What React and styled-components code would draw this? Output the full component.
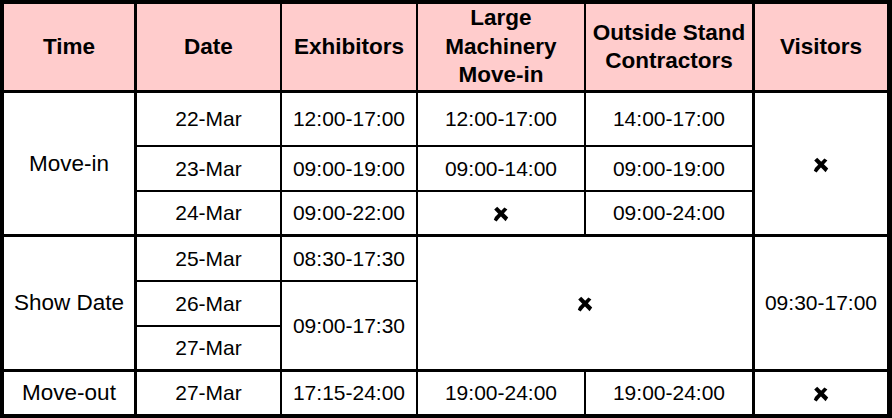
import React from "react";
import styled, { createGlobalStyle } from "styled-components";

const GlobalStyle = createGlobalStyle`
	html, body {
		margin: 0;
		padding: 0;
		background: #ffffff;
	}
	body {
		font-family: "Liberation Sans", Arial, sans-serif;
		color: #000;
	}
`;

const Table = styled.table`
	width: 892px;
	table-layout: fixed;
	border-collapse: separate;
	border-spacing: 0;
	border-style: solid;
	border-color: #000;
	border-width: 4px 5px 4px 4px;
	font-size: 21px;
`;

const Row = styled.tr`
	height: ${(props) => props.$h}px;
`;

const HeadCell = styled.th`
	background-color: #ffcccc;
	font-size: 22.5px;
	font-weight: 700;
	line-height: 28.5px;
	text-align: center;
	vertical-align: middle;
	padding: 0;
	white-space: nowrap;
	border-right: ${(props) => props.$r ?? 2}px solid #000;
	border-bottom: 3px solid #000;
`;

const Cell = styled.td`
	font-size: ${(props) => (props.$label ? 22.5 : 21)}px;
	font-weight: 400;
	text-align: center;
	vertical-align: middle;
	padding: 0;
	white-space: nowrap;
	border-right: ${(props) => props.$r ?? 2}px solid #000;
	border-bottom: ${(props) => props.$b ?? 2}px solid #000;
`;

const CrossMark = styled.svg`
	display: inline-block;
	vertical-align: middle;
	width: 16px;
	height: 16px;
`;

const Cross = () => (
	<CrossMark viewBox="0 0 16 16">
		<path
			d="M1.2 3.6 L4.2 0.8 L15.2 11.6 L12.6 15.2 Z"
			fill="#000"
		/>
		<path
			d="M11.4 1.6 L14.4 3.4 L6 12.4 L3.6 15.4 L0.8 13.8 L2 11 Z"
			fill="#000"
		/>
	</CrossMark>
);

const App = () => {
	return (
		<>
			<GlobalStyle />
			<Table>
				<colgroup>
					<col style={{ width: 133 }} />
					<col style={{ width: 145 }} />
					<col style={{ width: 136 }} />
					<col style={{ width: 168 }} />
					<col style={{ width: 169 }} />
					<col style={{ width: 132 }} />
				</colgroup>
				<thead>
					<Row $h={89}>
						<HeadCell $r={3}>Time</HeadCell>
						<HeadCell>Date</HeadCell>
						<HeadCell>Exhibitors</HeadCell>
						<HeadCell>
							Large
							<br />
							Machinery
							<br />
							Move-in
						</HeadCell>
						<HeadCell $r={3}>
							Outside Stand
							<br />
							Contractors
						</HeadCell>
						<HeadCell $r={0}>Visitors</HeadCell>
					</Row>
				</thead>
				<tbody>
					<Row $h={54}>
						<Cell rowSpan={3} $r={3} $b={3} $label>
							Move-in
						</Cell>
						<Cell>22-Mar</Cell>
						<Cell>12:00-17:00</Cell>
						<Cell>12:00-17:00</Cell>
						<Cell $r={3}>14:00-17:00</Cell>
						<Cell rowSpan={3} $r={0} $b={3}>
							<Cross />
						</Cell>
					</Row>
					<Row $h={45}>
						<Cell>23-Mar</Cell>
						<Cell>09:00-19:00</Cell>
						<Cell>09:00-14:00</Cell>
						<Cell $r={3}>09:00-19:00</Cell>
					</Row>
					<Row $h={45}>
						<Cell $b={3}>24-Mar</Cell>
						<Cell $b={3}>09:00-22:00</Cell>
						<Cell $b={3}>
							<Cross />
						</Cell>
						<Cell $r={3} $b={3}>
							09:00-24:00
						</Cell>
					</Row>
					<Row $h={45}>
						<Cell rowSpan={3} $r={3} $b={3} $label>
							Show Date
						</Cell>
						<Cell>25-Mar</Cell>
						<Cell>08:30-17:30</Cell>
						<Cell colSpan={2} rowSpan={3} $r={3} $b={3}>
							<Cross />
						</Cell>
						<Cell rowSpan={3} $r={0} $b={3}>
							09:30-17:00
						</Cell>
					</Row>
					<Row $h={45}>
						<Cell>26-Mar</Cell>
						<Cell rowSpan={2} $b={3}>
							09:00-17:30
						</Cell>
					</Row>
					<Row $h={45}>
						<Cell $b={3}>27-Mar</Cell>
					</Row>
					<Row $h={42}>
						<Cell $r={3} $b={0} $label>
							Move-out
						</Cell>
						<Cell $b={0}>27-Mar</Cell>
						<Cell $b={0}>17:15-24:00</Cell>
						<Cell $b={0}>19:00-24:00</Cell>
						<Cell $r={3} $b={0}>
							19:00-24:00
						</Cell>
						<Cell $r={0} $b={0}>
							<Cross />
						</Cell>
					</Row>
				</tbody>
			</Table>
		</>
	);
};

export default App;
